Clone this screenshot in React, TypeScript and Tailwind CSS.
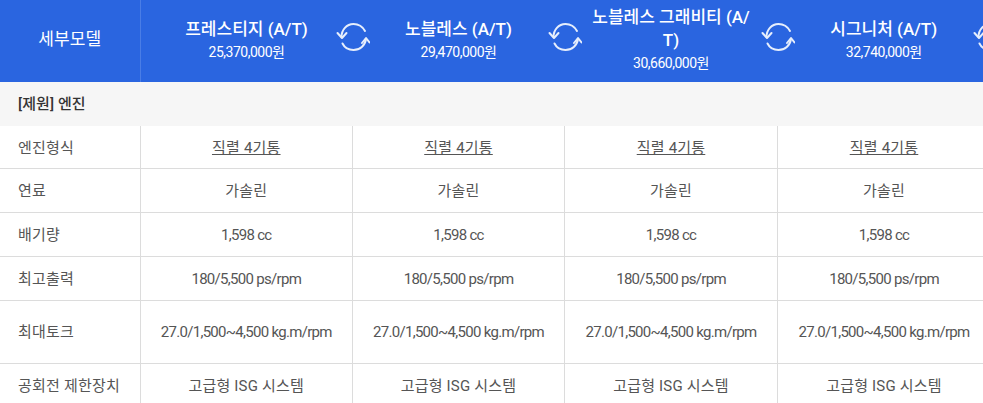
const font = "font-['Roboto','Noto_Sans_CJK_KR',sans-serif]";

const models = [
  { name: "프레스티지 (A/T)", price: "25,370,000원" },
  { name: "노블레스 (A/T)", price: "29,470,000원" },
  { name: "노블레스 그래비티 (A/\u200bT)", price: "30,660,000원" },
  { name: "시그니처 (A/T)", price: "32,740,000원" },
];

const rows = [
  { label: "엔진형식", value: "직렬 4기통", link: true, h: "h-[42px]", track: "tracking-[0.2px]" },
  { label: "연료", value: "가솔린", h: "h-[44px]", track: "tracking-[0.2px]" },
  { label: "배기량", value: "1,598 cc", h: "h-[44px]", track: "tracking-[-0.7px]" },
  { label: "최고출력", value: "180/5,500 ps/rpm", h: "h-[44px]", track: "tracking-[-0.7px]" },
  { label: "최대토크", value: "27.0/1,500~4,500 kg.m/rpm", h: "h-[63px]", track: "tracking-[-0.7px]" },
  { label: "공회전 제한장치", value: "고급형 ISG 시스템", h: "h-[44px]", track: "tracking-[0.2px]" },
];

function SwapIcon() {
  return (
    <svg width="34" height="30" viewBox="0 0 34 30" fill="none" stroke="#e6eefc" strokeWidth="2" strokeLinecap="round" strokeLinejoin="round">
      <path d="M5.5 15C5.5 8 10.500 2 17.500 2c5 0 9 2.500 11.500 7" />
      <path d="M1.500 11L6 16l4.500-5" />
      <path d="M30 17c-1 6.500-6 11-12.500 11-5 0-9-2.500-11-6.500" />
      <path d="M26 21l4-5 3.500 4.500" />
    </svg>
  );
}

export default function App() {
  return (
    <div className={`w-[983px] h-[403px] overflow-hidden bg-white ${font}`}>
      <table className="w-[990px] table-fixed border-collapse">
        <colgroup>
          <col className="w-[140px]" />
          <col className="w-[212.5px]" />
          <col className="w-[212px]" />
          <col className="w-[213px]" />
          <col className="w-[212.5px]" />
        </colgroup>
        <thead>
          <tr className="h-[82px] bg-[#2a65e0] text-white">
            <th className="border-r border-[#4a7de6] pb-[2px] text-[17px] font-normal tracking-[0.1px]">세부모델</th>
            {models.map((m) => (
              <th key={m.name} className="relative px-[22px] pb-[2px] font-normal">
                <div className="text-[17px] leading-[23px] font-medium tracking-[0px]">{m.name}</div>
                <div className="text-[14px] leading-[22px] tracking-[-0.5px]">{m.price}</div>
                <span className="absolute right-[-17px] top-[22px] z-10">
                  <SwapIcon />
                </span>
              </th>
            ))}
          </tr>
        </thead>
        <tbody className="text-[15px] text-[#555]">
          <tr className="h-[44px] bg-[#f6f6f6]">
            <td colSpan={5} className="pl-[18px] font-medium text-[#333] tracking-[0.1px]">[제원] 엔진</td>
          </tr>
          {rows.map((r) => (
            <tr key={r.label} className={`${r.h} border-b border-[#dcdcdc]`}>
              <td className="pl-[18px] pt-[2px] border-r border-[#dcdcdc] tracking-[0.2px]">{r.label}</td>
              {models.map((m) => (
                <td key={m.name} className={`pt-[2px] text-center border-r border-[#dcdcdc] last:border-r-0 ${r.track}`}>
                  {r.link ? <span className="underline">{r.value}</span> : r.value}
                </td>
              ))}
            </tr>
          ))}
        </tbody>
      </table>
    </div>
  );
}
